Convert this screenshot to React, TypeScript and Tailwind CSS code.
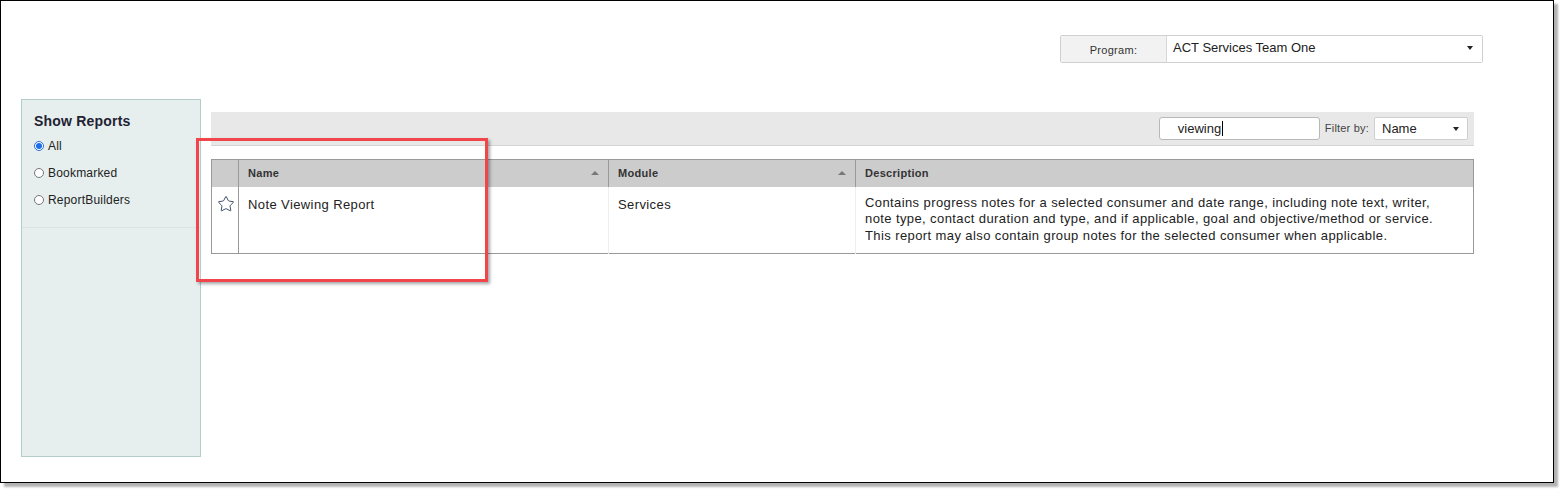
import { Star } from 'lucide-react'

const font = { fontFamily: '"Liberation Sans", Arial, sans-serif' }

function Caret() {
  return <span className="inline-block h-0 w-0 border-x-[3px] border-t-[4px] border-x-transparent border-t-[#222]" />
}

function SortUp() {
  return <span className="inline-block h-0 w-0 border-x-[4px] border-b-[4px] border-x-transparent border-b-[#777]" />
}

function Radio({ label, checked }: { label: string; checked?: boolean }) {
  return (
    <label className="flex items-center gap-[4px] text-[12px] text-[#222] tracking-[0.2px]">
      <span
        className={
          checked
            ? 'flex h-[10px] w-[10px] items-center justify-center rounded-full border border-[#2a6fd6] bg-white'
            : 'flex h-[10px] w-[10px] items-center justify-center rounded-full border border-[#777] bg-white'
        }
      >
        {checked && <span className="h-[6px] w-[6px] rounded-full bg-[#1d6ee6]" />}
      </span>
      {label}
    </label>
  )
}

export default function App() {
  return (
    <div className="h-[491px] w-[1561px] bg-white" style={font}>
      <div className="relative h-[483px] w-[1554px] border border-black bg-white shadow-[4px_4px_2px_rgba(0,0,0,0.3)]">
        {/* Program picker */}
        <div className="flex justify-end pr-[70px] pt-[34px]">
          <div className="flex h-[28px] w-[423px] rounded-[2px] border border-[#d0d0d0]">
            <div className="flex w-[106px] items-center justify-center border-r border-[#d8d8d8] bg-[#f2f2f2] pt-[3px] text-[11px] tracking-[0.3px] text-[#333]">
              Program:
            </div>
            <div className="flex flex-1 items-center justify-between bg-white pl-[6px] pr-[9px] pb-[2px] text-[13px] text-[#222]">
              ACT Services Team One
              <Caret />
            </div>
          </div>
        </div>

        <div className="mt-[36px] flex">
          {/* Left filter panel */}
          <div className="ml-[20px] h-[358px] w-[180px] border border-[#b3cdca] bg-[#e6efee]">
            <div className="border-b border-[#d9e4e3] px-[12px] pb-[18px] pt-[11px]">
              <div className="mb-[5px] text-[14px] font-bold tracking-[0.2px] text-[#223]">Show Reports</div>
              <div className="flex flex-col gap-[9px]">
                <Radio label="All" checked />
                <Radio label="Bookmarked" />
                <Radio label="ReportBuilders" />
              </div>
            </div>
          </div>

          {/* Report list */}
          <div className="relative ml-[10px] mt-[13px] w-[1263px]">
            <div className="flex h-[34px] items-center justify-end border-b border-[#d4d4d4] bg-[#e8e8e8] pr-[6px]">
              <div className="flex h-[23px] w-[161px] items-center rounded-[3px] border border-[#b8b8b8] bg-white pl-[18px] text-[13px] text-[#222]">
                viewing<span className="ml-px h-[15px] w-px bg-black" />
              </div>
              <span className="ml-[5px] text-[11px] tracking-[0.2px] text-[#444]">Filter by:</span>
              <div className="ml-[5px] flex h-[23px] w-[94px] items-center justify-between rounded-[2px] border border-[#cfcfcf] bg-white pl-[7px] pr-[8px] text-[13px] text-[#222]">
                Name
                <Caret />
              </div>
            </div>

            <table className="mt-[13px] w-full border-collapse border border-[#999] text-left">
              <thead>
                <tr className="h-[27px] bg-[#cccccc] text-[11px] font-bold tracking-[0.3px] text-[#333]">
                  <th className="w-[27px] border-r border-[#999]" />
                  <th className="w-[370px] border-r border-[#999] px-[9px] font-bold">
                    <div className="flex items-center justify-between">
                      Name
                      <SortUp />
                    </div>
                  </th>
                  <th className="w-[247px] border-r border-[#999] px-[9px] font-bold">
                    <div className="flex items-center justify-between">
                      Module
                      <SortUp />
                    </div>
                  </th>
                  <th className="px-[9px] font-bold">Description</th>
                </tr>
              </thead>
              <tbody>
                <tr className="h-[67px] align-top text-[13px] tracking-[0.4px] text-[#222]">
                  <td className="border-r border-[#999] pl-[5px] pt-[8px]">
                    <Star size={18} strokeWidth={1.1} className="text-[#1a2a4a]" />
                  </td>
                  <td className="border-r border-[#eee] px-[9px] pt-[8px]">Note Viewing Report</td>
                  <td className="border-r border-[#eee] px-[9px] pt-[8px]">Services</td>
                  <td className="px-[9px] pt-[8px] leading-[16.5px]">
                    Contains progress notes for a selected consumer and date range, including note text, writer,
                    <br />
                    note type, contact duration and type, and if applicable, goal and objective/method or service.
                    <br />
                    This report may also contain group notes for the selected consumer when applicable.
                  </td>
                </tr>
              </tbody>
            </table>

            {/* Highlight annotation */}
            <div className="absolute left-[-15px] top-[26px] h-[144px] w-[292px] border-[3px] border-[#f0454a] shadow-[2px_2px_3px_rgba(0,0,0,0.35)]" />
          </div>
        </div>
      </div>
    </div>
  )
}
